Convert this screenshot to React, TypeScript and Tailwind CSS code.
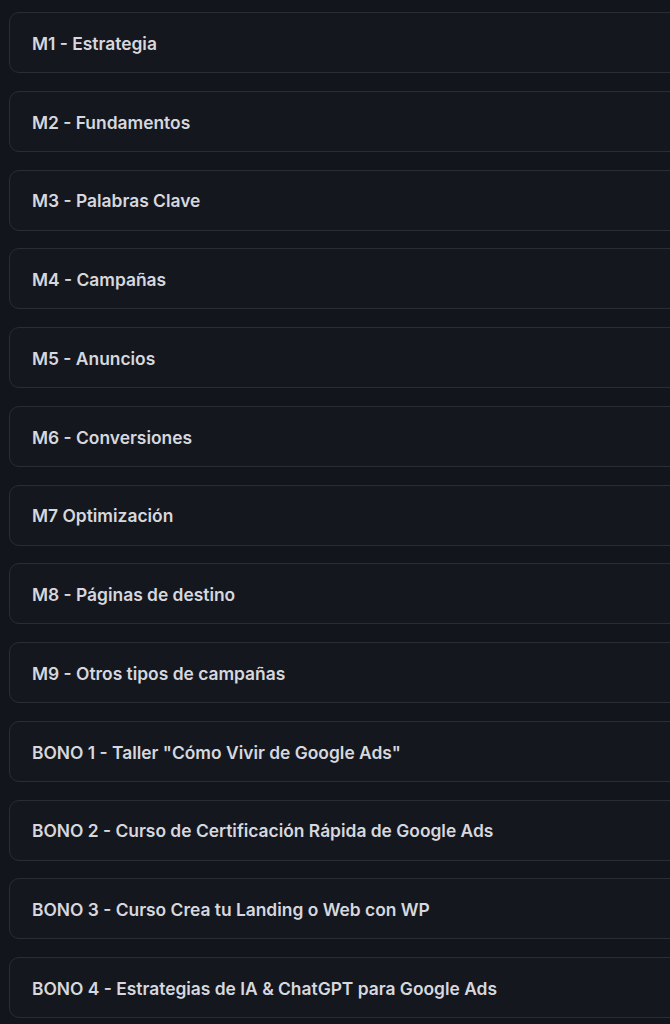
import React from "react";

const items = [
  "M1 - Estrategia",
  "M2 - Fundamentos",
  "M3 - Palabras Clave",
  "M4 - Campañas",
  "M5 - Anuncios",
  "M6 - Conversiones",
  "M7 Optimización",
  "M8 - Páginas de destino",
  "M9 - Otros tipos de campañas",
  'BONO 1 - Taller "Cómo Vivir de Google Ads"',
  "BONO 2 - Curso de Certificación Rápida de Google Ads",
  "BONO 3 - Curso Crea tu Landing o Web con WP",
  "BONO 4 - Estrategias de IA & ChatGPT para Google Ads",
];

export default function App() {
  return (
    <div
      className="min-h-screen w-full overflow-hidden bg-[#13151c] pt-[12px]"
      style={{ fontFamily: "Inter, 'Noto Sans', sans-serif" }}
    >
      <div className="flex flex-col gap-[17.75px] pl-[9px]">
        {items.map((t) => (
          <div
            key={t}
            className="flex h-[61px] w-[calc(100%+40px)] items-center rounded-[10px] border border-[#2a2d36] bg-[#15171e] pl-[22px] pt-[3px]"
          >
            <span className="text-[17.4px] font-semibold text-[#d6d8de]">
              {t}
            </span>
          </div>
        ))}
      </div>
    </div>
  );
}
